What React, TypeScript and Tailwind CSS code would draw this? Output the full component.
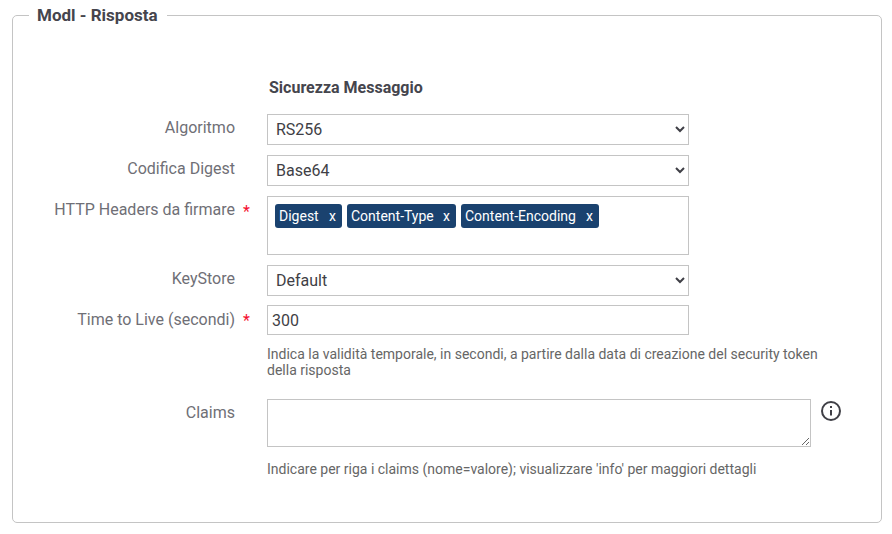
const labelClass = "w-[222px] shrink-0 text-right text-[16px] leading-[20px] text-[#6f6f76]";
const noteClass = "text-[14px] leading-[16px] text-[#666666]";
const fieldClass = "border border-[#c4c4c4] bg-white text-[16px] text-[#3f3f46] outline-none";

function Row({
  label,
  required,
  labelTop = "pt-[4px]",
  className,
  children,
}: {
  label: string;
  required?: boolean;
  labelTop?: string;
  className?: string;
  children: React.ReactNode;
}) {
  return (
    <div className={`flex ${className ?? ""}`}>
      <div className={`${labelClass} ${labelTop}`}>{label}</div>
      <div className="w-[32px] shrink-0 pl-[8px] pt-[6px] text-[16px] leading-[20px] text-[#f5102f]">
        {required ? "*" : ""}
      </div>
      <div>{children}</div>
    </div>
  );
}

function Chip({ text, width }: { text: string; width: string }) {
  return (
    <span className={`flex h-[24px] items-center justify-between rounded-[3px] bg-[#1a426f] pl-[4px] pr-[6px] text-[14px] text-white ${width}`}>
      <span>{text}</span>
      <span>x</span>
    </span>
  );
}

function Dropdown({ value }: { value: string }) {
  return (
    <select defaultValue={value} className={`${fieldClass} block h-[31px] w-[422px] pl-[4px]`}>
      <option>{value}</option>
    </select>
  );
}

export default function App() {
  return (
    <div className="min-h-[534px] bg-white pl-[12px] pr-[10px] pt-[5px] font-['Roboto',sans-serif]">
      <fieldset className="h-[518px] rounded-[5px] border border-[#c4c4c4]">
        <legend className="ml-[16px] pl-[8px] pr-[9px] text-[17px] font-bold leading-[20px] text-[#45454d]">Modl - Risposta</legend>

        <div className="pl-[256px] pt-[53px] text-[16px] font-bold leading-[20px] text-[#45454d]">
          Sicurezza Messaggio
        </div>

        <Row label="Algoritmo" className="mt-[16px]">
          <Dropdown value="RS256" />
        </Row>
        <Row label="Codifica Digest" className="mt-[10px]">
          <Dropdown value="Base64" />
        </Row>
        <Row label="HTTP Headers da firmare" required className="mt-[10px]">
          <div className={`${fieldClass} flex h-[59px] w-[422px] items-start gap-[5px] pl-[7px] pt-[7px]`}>
            <Chip text="Digest" width="w-[67px]" />
            <Chip text="Content-Type" width="w-[109px]" />
            <Chip text="Content-Encoding" width="w-[138px]" />
          </div>
        </Row>
        <Row label="KeyStore" className="mt-[10px]">
          <Dropdown value="Default" />
        </Row>
        <Row label="Time to Live (secondi)" required labelTop="pt-[5px]" className="mt-[9px]">
          <input readOnly value="300" className={`${fieldClass} block h-[30px] w-[422px] pl-[4px]`} />
          <p className={`${noteClass} mt-[11px] w-[560px]`}>
            Indica la validità temporale, in secondi, a partire dalla data di creazione del security token della risposta
          </p>
        </Row>
        <Row label="Claims" className="mt-[21px]">
          <div className="flex items-start">
            <textarea readOnly className={`${fieldClass} block h-[48px] w-[544px]`} />
            <svg className="ml-[10px] mt-[2px] size-[20px]" viewBox="0 0 20 20" fill="none" stroke="#3f3f46" strokeWidth="2">
              <circle cx="10" cy="10" r="9" />
              <path d="M10 9v5.5M10 5v2" />
            </svg>
          </div>
          <p className={`${noteClass} mt-[14px]`}>
            Indicare per riga i claims (nome=valore); visualizzare 'info' per maggiori dettagli
          </p>
        </Row>
      </fieldset>
    </div>
  );
}
